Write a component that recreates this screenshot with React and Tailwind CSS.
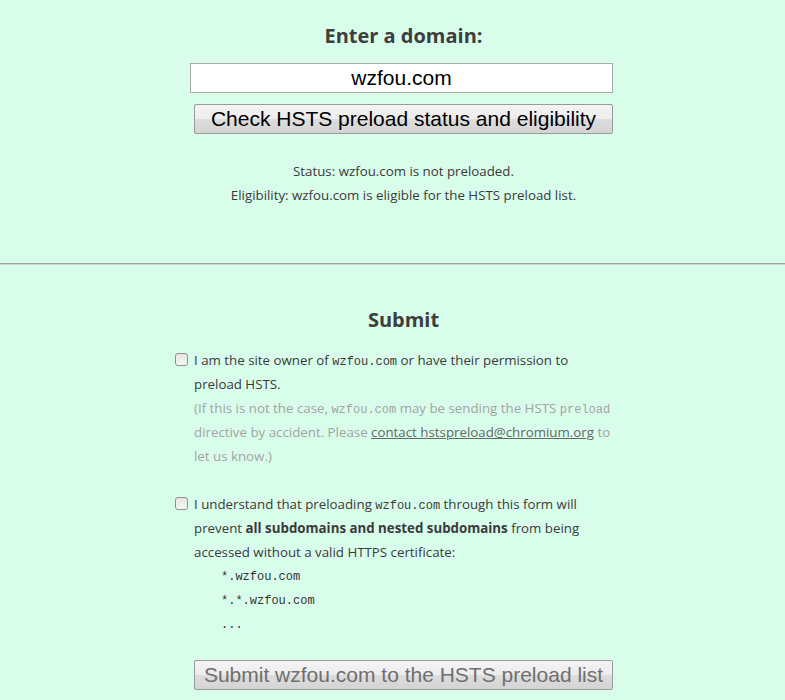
export default function App() {
  const mono = "font-['Liberation_Mono',monospace] text-[12px] leading-none";
  const btn =
    "h-[30px] w-full border border-[#9a9a9a] rounded-[2px] bg-[linear-gradient(#f4f4f4,#ececec_50%,#dddddd_50%,#d4d4d4)] font-['Liberation_Sans',Arial,sans-serif] text-[21px] leading-[28px]";
  const Check = () => (
    <span className="absolute left-[-19px] top-[5px] h-[13px] w-[13px] rounded-[3px] border border-[#8f8f8f] bg-[linear-gradient(#e6e6e6,#f8f8f8)]" />
  );
  return (
    <div className="min-h-[700px] bg-[#d9fdeb] font-['Open_Sans',sans-serif] text-[13.3px] text-[#3a3a3a]">
      <div className="pt-[22px]">
        <div className="mx-auto w-[441px] pl-[22px]">
          <h1 className="text-center text-[20px] font-bold leading-[28px] text-[#3d3d3d]">Enter a domain:</h1>
          <div className="-ml-[4px] mt-[13px] flex h-[30px] items-center justify-center border border-[#a9a9a9] bg-white font-['Liberation_Sans',Arial,sans-serif] text-[21px] text-black">
            wzfou.com
          </div>
          <button className={btn + " mt-[11px] text-black"}>Check HSTS preload status and eligibility</button>
          <div className="mt-[25px] text-center leading-[24px]">
            <div>Status: wzfou.com is not preloaded.</div>
            <div>Eligibility: wzfou.com is eligible for the HSTS preload list.</div>
          </div>
        </div>
      </div>
      <div className="mt-[56px] border-t border-b border-t-[#9aa59f] border-b-[#c9d9cf]" />
      <div className="mx-auto w-[441px] pl-[22px]">
        <h2 className="mt-[41px] text-center text-[20px] font-bold leading-[28px] text-[#3d3d3d]">Submit</h2>
        <div className="relative mt-[14px] leading-[24px]">
          <Check />
          <div>
            I am the site owner of <span className={mono}>wzfou.com</span> or have their permission to preload HSTS.
          </div>
          <div className="text-[#a3a3a3]">
            (If this is not the case, <span className={mono}>wzfou.com</span> may be sending the HSTS{" "}
            <span className={mono}>preload</span> directive by accident. Please{" "}
            <span className="text-[#666] underline">contact hstspreload@chromium.org</span> to let us know.)
          </div>
        </div>
        <div className="relative mt-[24px] leading-[24px]">
          <Check />
          <div>
            I understand that preloading <span className={mono}>wzfou.com</span> through this form will prevent{" "}
            <b>all subdomains and nested subdomains</b> from being accessed without a valid HTTPS certificate:
          </div>
          <div className="mt-[1px] pl-[27px] font-['Liberation_Mono',monospace] text-[12px] leading-[24px] text-[#333]">
            <div>*.wzfou.com</div>
            <div>*.*.wzfou.com</div>
            <div>...</div>
          </div>
        </div>
        <button className={btn + " mt-[23px] text-[#6f6f6f]"}>Submit wzfou.com to the HSTS preload list</button>
      </div>
    </div>
  );
}
